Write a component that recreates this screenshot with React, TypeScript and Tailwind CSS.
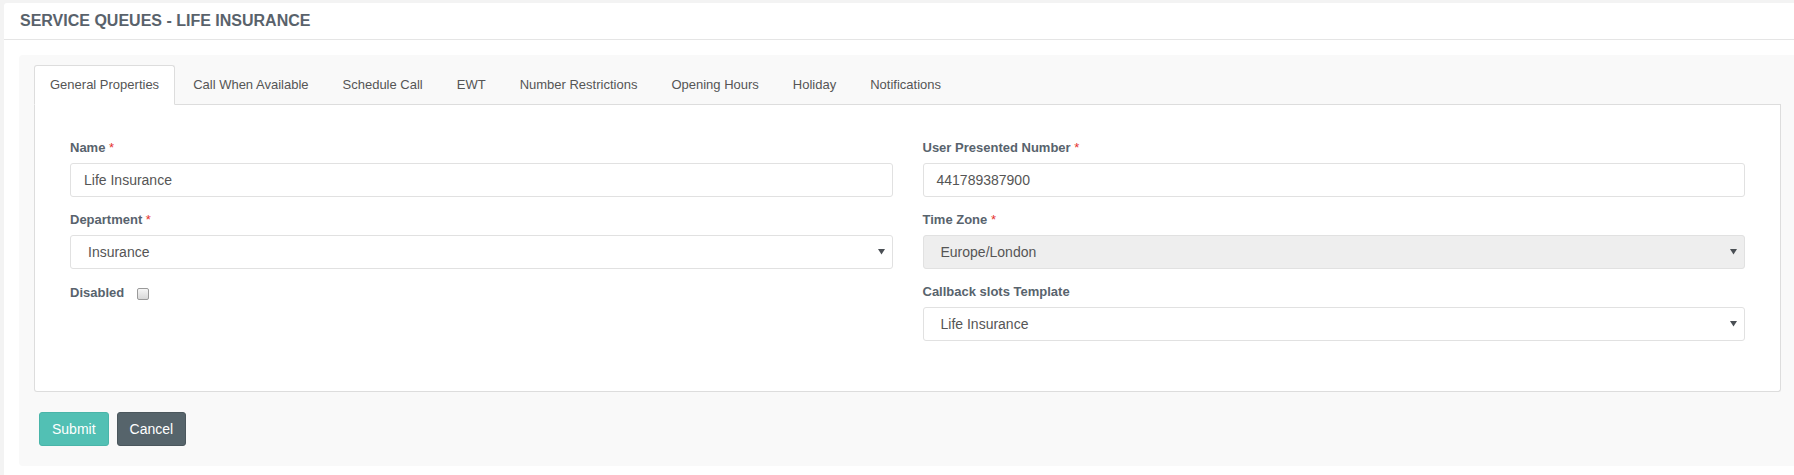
import React from 'react';

const tabs = [
  'General Properties',
  'Call When Available',
  'Schedule Call',
  'EWT',
  'Number Restrictions',
  'Opening Hours',
  'Holiday',
  'Notifications',
];

const Caret = () => (
  <svg width="7" height="6" viewBox="0 0 7 6" className="shrink-0">
    <polygon points="0,0 7,0 3.5,5.5" fill="#4a4f54" />
  </svg>
);

const Label = ({ text, required }: { text: string; required?: boolean }) => (
  <div className="h-[16px] leading-[16px] mb-[7px] text-[13px] font-bold text-[#58636d]">
    {text}
    {required && <span className="font-normal text-[#e5322d]"> *</span>}
  </div>
);

const TextBox = ({ value }: { value: string }) => (
  <div className="h-[34px] flex items-center px-[13px] bg-white border border-[#e1e1e1] rounded-[3px] text-[14px] text-[#555]">
    {value}
  </div>
);

const SelectBox = ({ value, disabled }: { value: string; disabled?: boolean }) => (
  <div
    className={`h-[34px] flex items-center justify-between pl-[17px] pr-[7px] border border-[#e1e1e1] rounded-[3px] text-[14px] text-[#555] ${
      disabled ? 'bg-[#eeeeee]' : 'bg-white'
    }`}
  >
    <span>{value}</span>
    <Caret />
  </div>
);

export default function App() {
  return (
    <div
      className="w-full h-[475px] overflow-hidden bg-[#f3f3f3] pt-[3px] pl-[4px]"
      style={{ fontFamily: '"Liberation Sans", Arial, sans-serif' }}
    >
      <div className="bg-white h-full rounded-tl-[3px]">
        {/* header */}
        <div className="h-[37px] flex items-center px-[16px] border-b border-[#e5e5e5]">
          <h1 className="text-[16px] font-bold text-[#59626b] uppercase">Service Queues - Life Insurance</h1>
        </div>

        <div className="pt-[15px] pl-[15px]">
          <div className="bg-[#f9f9f9] rounded-l-[4px] pl-[15px] pr-[13px] pt-[10px] pb-[20px]">
            {/* tabs */}
            <div className="flex border-b border-[#dddddd]">
              {tabs.map((t, i) => (
                <div
                  key={t}
                  className={`h-[40px] -mb-px mr-[2px] px-[15px] flex items-center text-[13px] text-[#555] rounded-t-[3px] border ${
                    i === 0 ? 'bg-white border-[#dddddd] border-b-white' : 'border-transparent'
                  }`}
                >
                  {t}
                </div>
              ))}
            </div>

            {/* tab content */}
            <div className="bg-white border border-t-0 border-[#dddddd] rounded-b-[3px] px-[35px] pt-[35px] pb-[35px]">
              <div className="grid grid-cols-2 gap-x-[30px]">
                <div>
                  <div className="mb-[15px]">
                    <Label text="Name" required />
                    <TextBox value="Life Insurance" />
                  </div>
                  <div className="mb-[15px]">
                    <Label text="Department" required />
                    <SelectBox value="Insurance" />
                  </div>
                  <div className="h-[18px] flex items-center gap-[13px] text-[13px] font-bold text-[#58636d]">
                    <span>Disabled</span>
                    <span className="w-[12px] h-[12px] mt-[2px] rounded-[2px] border border-[#9a9a9a] bg-linear-to-b from-[#f6f6f6] to-[#d8d8d8]" />
                  </div>
                </div>
                <div>
                  <div className="mb-[15px]">
                    <Label text="User Presented Number" required />
                    <TextBox value="441789387900" />
                  </div>
                  <div className="mb-[15px]">
                    <Label text="Time Zone" required />
                    <SelectBox value="Europe/London" disabled />
                  </div>
                  <div className="mb-[15px]">
                    <Label text="Callback slots Template" />
                    <SelectBox value="Life Insurance" />
                  </div>
                </div>
              </div>
            </div>

            {/* actions */}
            <div className="flex gap-[8px] mt-[20px] ml-[5px]">
              <button className="h-[34px] px-[12px] rounded-[3px] border border-[#49b5a9] bg-[#52c0b4] text-white text-[14px]">
                Submit
              </button>
              <button className="h-[34px] px-[12px] rounded-[3px] border border-[#4b575d] bg-[#56646b] text-white text-[14px]">
                Cancel
              </button>
            </div>
          </div>
        </div>
      </div>
    </div>
  );
}
